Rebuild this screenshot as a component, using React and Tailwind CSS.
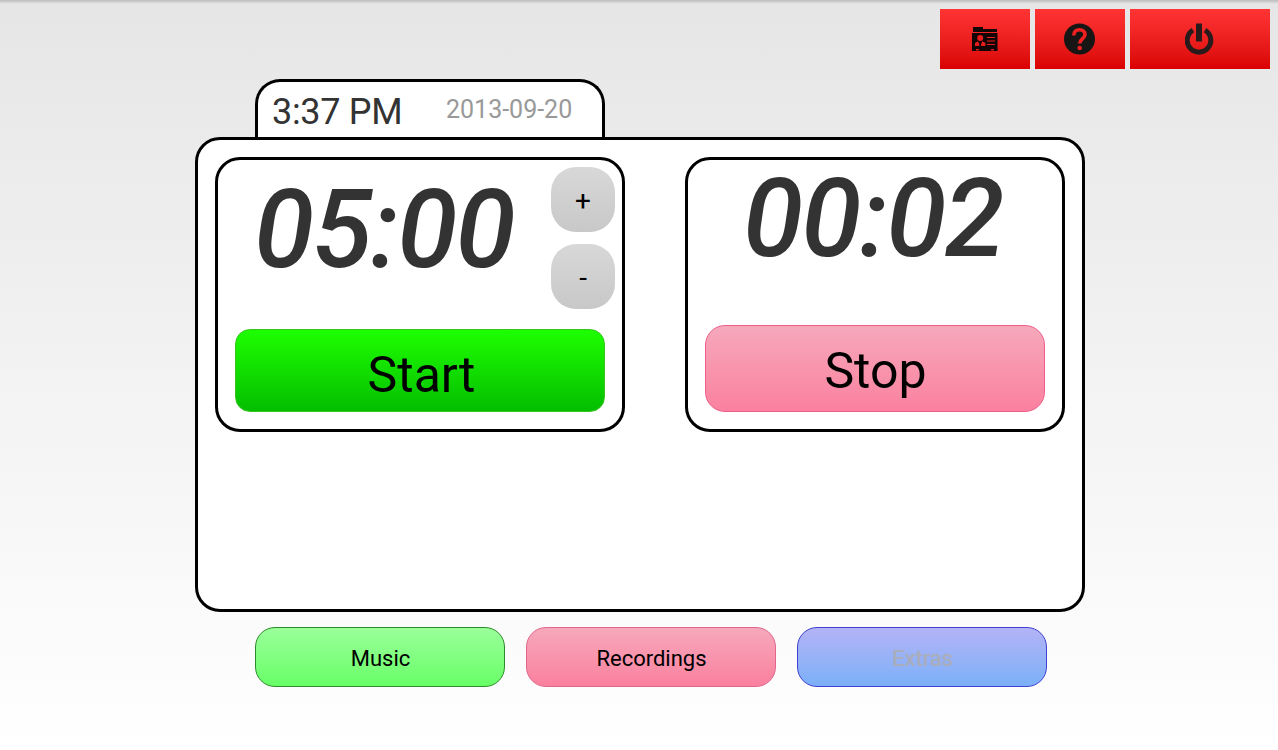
import React from 'react';

const ContactsIcon = () => (
    <svg width="26" height="25" viewBox="0 0 26 25" fill="#140505">
        <path d="M1 0h10v2h14v3H1z" />
        <path fillRule="evenodd" d="M0 6h25.500v18H0zM15 10v1h8v-1zM15 13.500v1h8v-1zM15 17v1h8v-1zM4 22v1.500h3V22zM19 22v1.500h3V22z" />
        <circle cx="8.200" cy="11" r="3" fill="#e81c1c" />
        <path d="M6 14.300L3 16v3h4.300v-2zM10.400 14.300l3 1.700v3H9.100v-2z" fill="#e81c1c" />
    </svg>
);

const HelpIcon = () => (
    <svg width="32" height="32" viewBox="0 0 32 32" fill="none">
        <circle cx="15.500" cy="16" r="15.500" fill="#181515" />
        <path d="M9.800 12.500C9.800 8.500 12.200 6.700 15.500 6.700c3.500 0 5.500 2 5.500 4.700 0 4.500-5.300 4.400-5.300 9.100" stroke="#f12020" strokeWidth="3.600" />
        <circle cx="15.700" cy="25" r="2.300" fill="#f12020" />
    </svg>
);

const PowerIcon = () => (
    <svg width="30" height="32" viewBox="0 0 30 32" fill="none">
        <path d="M8 7.200a11.800 11.800 0 1 0 12 0" stroke="#291b1b" strokeWidth="5" />
        <path d="M11 .5h6v18h-6z" fill="#291b1b" />
    </svg>
);

const headerButton = 'flex h-[60px] items-center justify-center bg-linear-to-b from-[#ff3333] to-[#d90000]';
const roundButton = 'flex h-[65px] w-16 items-center justify-center rounded-[25px] bg-linear-to-b from-[#d8d8d8] to-[#c8c8c8] pt-[3px] text-[28px] leading-none';
const menuButton = 'h-[60px] w-[250px] rounded-[20px] border bg-linear-to-b pt-0.5 pl-px text-[22px]';

const Readout = ({ value }) => (
    <div className="text-[109px] leading-[80px] font-medium italic tracking-[-1.800px] whitespace-nowrap text-[#333333]">
        {value}
    </div>
);

const App = () => {
    return (
        <div className="h-[750px] w-[1278px] overflow-hidden bg-linear-to-b from-[#e6e6e6] to-white font-[Roboto,sans-serif] text-black">
            {/* Header */}
            <div className="h-1 bg-linear-to-b from-[#bcbcbc] to-[#e6e6e6]"></div>
            <div className="flex justify-end gap-[5px] pt-[5px] pr-2">
                <button className={`${headerButton} w-[90px]`} aria-label="Contacts">
                    <ContactsIcon />
                </button>
                <button className={`${headerButton} w-[90px]`} aria-label="Help">
                    <HelpIcon />
                </button>
                <button className={`${headerButton} w-[140px]`} aria-label="Power">
                    <PowerIcon />
                </button>
            </div>

            {/* Clock tab */}
            <div className="mt-2.5 ml-[255px] flex h-[58px] w-[350px] rounded-t-[25px] border-[3px] border-b-0 border-black bg-white pl-3.5">
                <span className="w-[174px] pt-[9px] text-[36px] leading-[42px] tracking-[-0.300px] text-[#333333]">3:37 PM</span>
                <span className="pt-[13px] text-[25px] leading-[30px] text-[#999999]">2013-09-20</span>
            </div>

            {/* Timers */}
            <div className="ml-[195px] flex h-[475px] w-[890px] items-start justify-between rounded-[25px] border-[3px] border-black bg-white p-[17px]">
                <div className="flex h-[275px] w-[410px] flex-col justify-between rounded-[25px] border-[3px] border-black px-[17px] pt-[7px] pb-[17px]">
                    <div className="-mr-2.5 flex justify-between">
                        <div className="pt-[23px] pl-[19px]">
                            <Readout value="05:00" />
                        </div>
                        <div className="flex flex-col gap-3">
                            <button className={roundButton}>+</button>
                            <button className={roundButton}>-</button>
                        </div>
                    </div>
                    <button className="h-[83px] w-[370px] rounded-[15px] border border-[#38c41f] bg-linear-to-b from-[#1dff00] to-[#04be00] pt-2 pl-[3px] text-[50px] leading-none">
                        Start
                    </button>
                </div>

                <div className="flex h-[275px] w-[380px] flex-col justify-between rounded-[25px] border-[3px] border-black px-[17px] pt-[19px] pb-[17px]">
                    <div className="pl-[38px]">
                        <Readout value="00:02" />
                    </div>
                    <button className="h-[87px] w-[340px] rounded-[20px] border border-[#ed5f89] bg-linear-to-b from-[#f6a8bb] to-[#fa809f] pt-1 pl-px text-[50px] leading-none">
                        Stop
                    </button>
                </div>
            </div>

            {/* Bottom menu */}
            <div className="mt-[15px] ml-[255px] flex gap-[21px]">
                <button className={`${menuButton} border-[#2c8a2c] from-[#99ff99] to-[#66ff66]`}>Music</button>
                <button className={`${menuButton} border-[#e0668c] from-[#f6a8bb] to-[#fa809f]`}>Recordings</button>
                <button className={`${menuButton} border-[#4040d0] from-[#b3b3f6] to-[#7ab0f8] text-[#a9adbc] text-shadow-[0_0_1px_#a9adbc]`} disabled>Extras</button>
            </div>
        </div>
    );
};

export default App;
